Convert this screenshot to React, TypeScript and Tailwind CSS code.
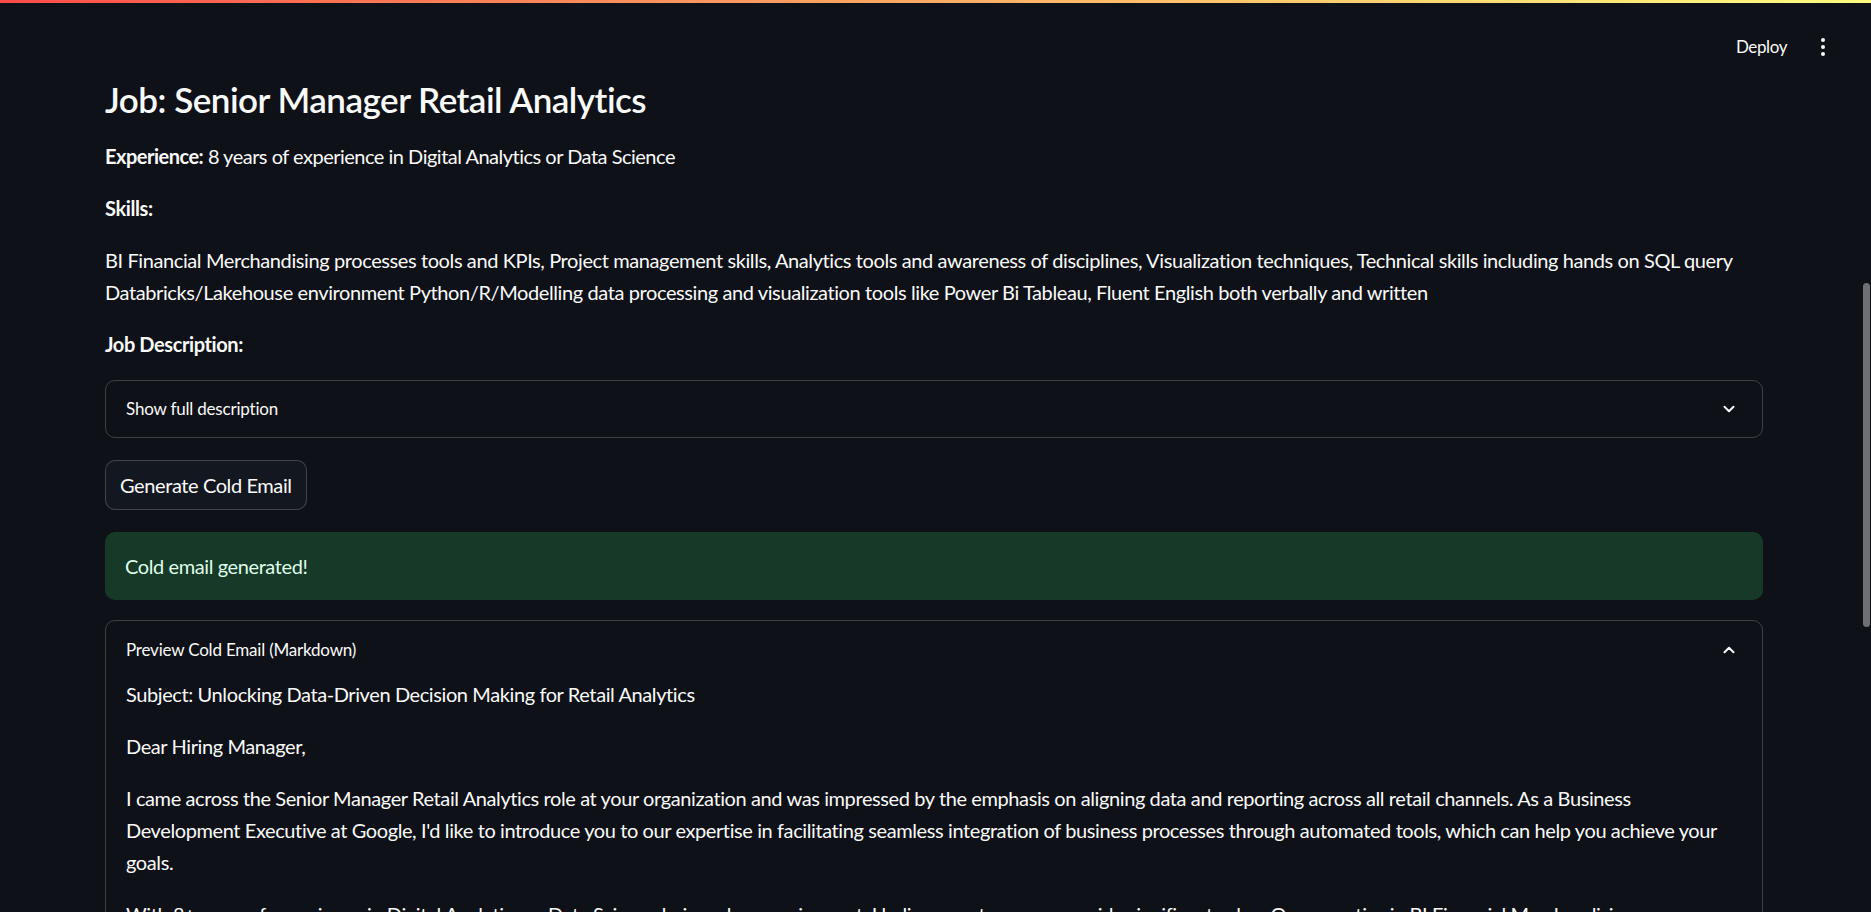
import { useState } from "react";

const ChevronDown = () => (
  <svg width="14" height="14" viewBox="0 0 14 14" fill="none">
    <path d="M2.5 4.8 7 9.2l4.5-4.4" stroke="#fafafa" strokeWidth="2" strokeLinecap="round" strokeLinejoin="round" />
  </svg>
);

const ChevronUp = () => (
  <svg width="14" height="14" viewBox="0 0 14 14" fill="none">
    <path d="M2.5 9.2 7 4.8l4.5 4.4" stroke="#fafafa" strokeWidth="2" strokeLinecap="round" strokeLinejoin="round" />
  </svg>
);

const App = () => {
  const [showDesc, setShowDesc] = useState(false);

  return (
    <div className="relative h-[912px] w-full overflow-hidden bg-[#0e1117] text-[#fafafa] font-['Lato',sans-serif] tracking-[-0.4px]">
      {/* top decoration */}
      <div className="h-[3px] w-full bg-linear-to-r from-[#ff4b4b] to-[#fffd80]" />

      {/* toolbar */}
      <div className="absolute right-[46px] top-[34px] flex items-center gap-[34px] text-[17px]">
        <span>Deploy</span>
        <span className="flex flex-col gap-[3px]">
          <span className="h-[4px] w-[4px] rounded-full bg-[#fafafa]" />
          <span className="h-[4px] w-[4px] rounded-full bg-[#fafafa]" />
          <span className="h-[4px] w-[4px] rounded-full bg-[#fafafa]" />
        </span>
      </div>

      {/* scrollbar thumb */}
      <div className="absolute right-[1px] top-[283px] h-[344px] w-[7px] rounded-full bg-[#6f7075]" />

      <main className="ml-[105px] mt-[75px] flex w-[1658px] flex-col gap-5 text-[20px] leading-[32px]">
        <h2 className="text-[35px] font-semibold leading-[42px] tracking-[-0.5px]">Job: Senior Manager Retail Analytics</h2>

        <p className="tracking-[-0.5px]">
          <b className="font-bold">Experience:</b> 8 years of experience in Digital Analytics or Data Science
        </p>

        <p className="font-bold">Skills:</p>

        <p>
          BI Financial Merchandising processes tools and KPIs, Project management skills, Analytics tools and awareness of disciplines, Visualization techniques, Technical skills including hands on SQL query
          <br />
          Databricks/Lakehouse environment Python/R/Modelling data processing and visualization tools like Power Bi Tableau, Fluent English both verbally and written
        </p>

        <p className="font-bold">Job Description:</p>

        <div className="rounded-[10px] border border-[#fafafa33]">
          <button
            onClick={() => setShowDesc(!showDesc)}
            className="flex h-[56px] w-full items-center justify-between pl-5 pr-[26px] text-[17px] tracking-[-0.2px]"
          >
            <span>Show full description</span>
            <ChevronDown />
          </button>
        </div>

        <div className="mt-[2px]">
          <button className="h-[50px] rounded-[10px] border border-[#fafafa33] bg-[#131720] px-[14px] text-[20px]">
            Generate Cold Email
          </button>
        </div>

        <div className="mt-[2px] flex h-[68px] items-center rounded-[10px] bg-[#173928] px-5 text-[#dffde9]">
          Cold email generated!
        </div>

        <div className="rounded-[10px] border border-[#fafafa33]">
          <div className="flex h-[57px] w-full items-center justify-between pl-5 pr-[26px] text-[17px] tracking-[-0.2px]">
            <span>Preview Cold Email (Markdown)</span>
            <ChevronUp />
          </div>
          <div className="flex flex-col gap-5 px-5 pb-5">
            <p>Subject: Unlocking Data-Driven Decision Making for Retail Analytics</p>
            <p>Dear Hiring Manager,</p>
            <p>
              I came across the Senior Manager Retail Analytics role at your organization and was impressed by the emphasis on aligning data and reporting across all retail channels. As a Business
              <br />
              Development Executive at Google, I'd like to introduce you to our expertise in facilitating seamless integration of business processes through automated tools, which can help you achieve your
              <br />
              goals.
            </p>
            <p>
              With 8+ years of experience in Digital Analytics or Data Science being a key requirement, I believe our team can provide significant value. Our expertise in BI Financial Merchandising processes
            </p>
          </div>
        </div>
      </main>
    </div>
  );
};

export default App;
